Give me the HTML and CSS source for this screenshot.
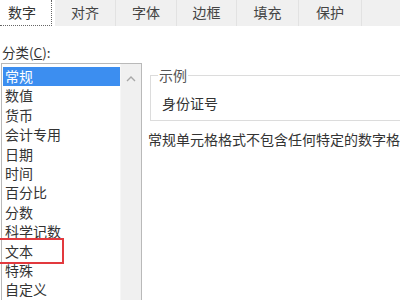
FILE: index.html
```html
<!DOCTYPE html>
<html lang="zh-CN">
<head>
    <meta charset="UTF-8">
    <meta name="viewport" content="width=device-width, initial-scale=1.0">
    <title>设置单元格格式</title>
    <link rel="stylesheet" href="styles.css">
</head>
<body>
<section class="format_dialog">
    <ul class="tabs">
        <li class="tab active">数字</li>
        <li class="tab" style="width: 61px">对齐</li>
        <li class="tab" style="width: 61px">字体</li>
        <li class="tab" style="width: 60px">边框</li>
        <li class="tab" style="width: 62px">填充</li>
        <li class="tab" style="width: 63px">保护</li>
        <li class="tab filler"></li>
    </ul>

    <div class="category_label">分类(<u>C</u>):</div>

    <div class="panel">
        <div class="listbox">
            <ul class="items">
                <li class="selected">常规</li>
                <li>数值</li>
                <li>货币</li>
                <li>会计专用</li>
                <li>日期</li>
                <li>时间</li>
                <li>百分比</li>
                <li>分数</li>
                <li>科学记数</li>
                <li>文本</li>
                <li>特殊</li>
                <li>自定义</li>
            </ul>
            <div class="scrollbar">
                <svg class="arrow" width="10" height="6" viewBox="0 0 10 6">
                    <path d="M1 5 L5 1 L9 5" fill="none" stroke="#a8a8a8" stroke-width="1.4"/>
                </svg>
            </div>
            <div class="mark"></div>
        </div>

        <div class="details">
            <fieldset class="sample">
                <legend>示例</legend>
                <div class="sample_value">身份证号</div>
            </fieldset>
            <p class="description">常规单元格格式不包含任何特定的数字格式。</p>
        </div>
    </div>
</section>
</body>
</html>
```

FILE: styles.css
```css
body {
    margin: 0;
    width: 400px;
    height: 300px;
    overflow: hidden;
    background: #fff;
    font-family: "Microsoft YaHei", "Noto Sans CJK SC", sans-serif;
    font-size: 14px;
    color: #333;
}

.format_dialog {
    width: 400px;
    height: 300px;
    overflow: hidden;
}

.tabs {
    display: flex;
    list-style: none;
    margin: 0;
    padding: 0;
    height: 26px;
}

.tab {
    box-sizing: border-box;
    height: 26px;
    line-height: 24px;
    text-align: center;
    background: #f0f0f0;
    border-right: 1px solid #e2e2e2;
    color: #444;
}

.tab.active {
    width: 52px;
    margin-right: 3px;
    padding-left: 8px;
    text-align: left;
    background: #fff;
    border-right: 1px dotted #666;
    border-bottom: 1px dotted #666;
    color: #333;
}

.tab.filler {
    flex: 1;
    border-right: none;
}

.category_label {
    margin: 16px 0 0 2px;
    line-height: 20px;
    height: 20px;
    font-size: 13.5px;
}

.category_label u {
    text-decoration-thickness: 1px;
}

.panel {
    display: flex;
    margin-top: 1px;
}

.listbox {
    position: relative;
    display: flex;
    flex-shrink: 0;
    width: 141px;
    height: 260px;
    margin-left: 1px;
    box-sizing: border-box;
    border: 1px solid #b9b9b9;
    border-bottom: none;
}

.items {
    flex: 1;
    list-style: none;
    margin: 0;
    padding: 3px 0 0 1px;
}

.items li {
    height: 19.4px;
    line-height: 18px;
    padding-left: 2px;
}

.items li.selected {
    background: #3c8ef0;
    color: #fff;
}

.scrollbar {
    width: 20px;
    background: #f0f0f0;
    border-left: 1px solid #f6f6f6;
    display: flex;
    justify-content: center;
}

.arrow {
    margin-top: 12px;
}

/* red annotation around 文本 */
.mark {
    position: absolute;
    left: -4px;
    top: 174px;
    width: 62px;
    height: 22px;
    border: 2px solid #e2393e;
}

.details {
    margin-left: 6px;
    white-space: nowrap;
}

.sample {
    width: 300px;
    margin: 4px 0 0 2px;
    padding: 0;
    border: 1px solid #dcdcdc;
}

.sample legend {
    margin-left: 7px;
    padding: 0 1px;
    line-height: 16px;
    color: #555;
}

.sample_value {
    padding: 10px 0 7px 11px;
    line-height: 20px;
}

.description {
    margin: 8px 0 0 0;
    line-height: 20px;
}
```
